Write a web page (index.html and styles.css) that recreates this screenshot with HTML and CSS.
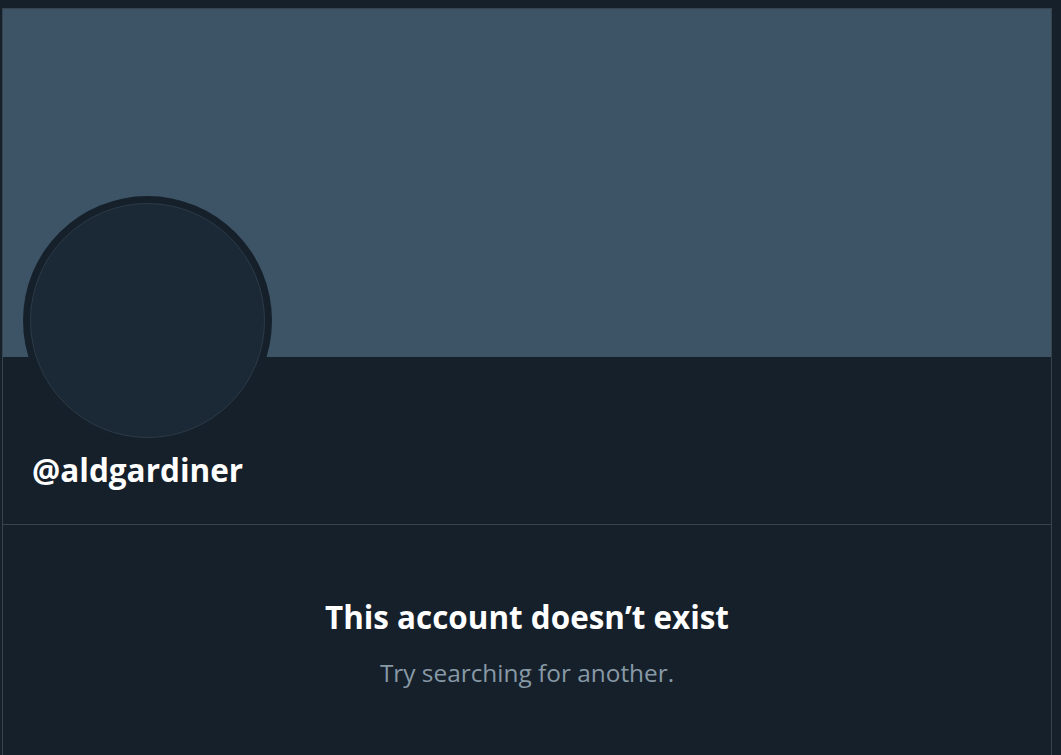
FILE: index.html
```html
<!DOCTYPE html>
<html lang="en">
<head>
<meta charset="utf-8">
<title>Profile</title>
<link rel="stylesheet" href="styles.css">
</head>
<body>
<main class="column">
  <div class="banner"></div>
  <section class="profile">
    <div class="avatar-ring"><div class="avatar"></div></div>
    <div class="handle">@aldgardiner</div>
  </section>
  <section class="empty">
    <h1 class="empty-title">This account doesn’t exist</h1>
    <p class="empty-sub">Try searching for another.</p>
  </section>
</main>
</body>
</html>
```
FILE: styles.css
```css
html, body {
  margin: 0;
  padding: 0;
  height: 100%;
  background: #15202b;
  overflow: hidden;
}
body {
  padding-top: 8px;
  padding-left: 2px;
  box-sizing: border-box;
  font-family: "Open Sans", "Noto Sans", "Liberation Sans", sans-serif;
  color: #ffffff;
}
.column {
  width: 1048px;
  height: 100%;
  border-left: 1px solid #38444d;
  border-right: 1px solid #38444d;
  border-top: 1px solid #38444d;
  background: #15202b;
}
.banner {
  height: 348px;
  background: #3d5466;
}
.profile {
  padding: 0 20px 34px 20px;
  border-bottom: 1px solid #38444d;
}
.avatar-ring {
  width: 249px;
  height: 249px;
  margin-top: -161px;
  border-radius: 50%;
  background: #15202b;
  box-sizing: border-box;
  padding: 7px;
}
.avatar {
  width: 100%;
  height: 100%;
  border-radius: 50%;
  background: #1b2836;
  border: 1px solid #2c3b48;
  box-sizing: border-box;
}
.handle {
  margin-top: 5px;
  font-size: 31.5px;
  line-height: 40px;
  font-weight: 700;
  padding-left: 9px;
}
.empty {
  text-align: center;
  padding-top: 72px;
}
.empty-title {
  margin: 0;
  font-size: 31.4px;
  line-height: 40px;
  font-weight: 700;
}
.empty-sub {
  margin: 20px 0 0 0;
  font-size: 24.4px;
  line-height: 32px;
  color: #8899a6;
}
```
